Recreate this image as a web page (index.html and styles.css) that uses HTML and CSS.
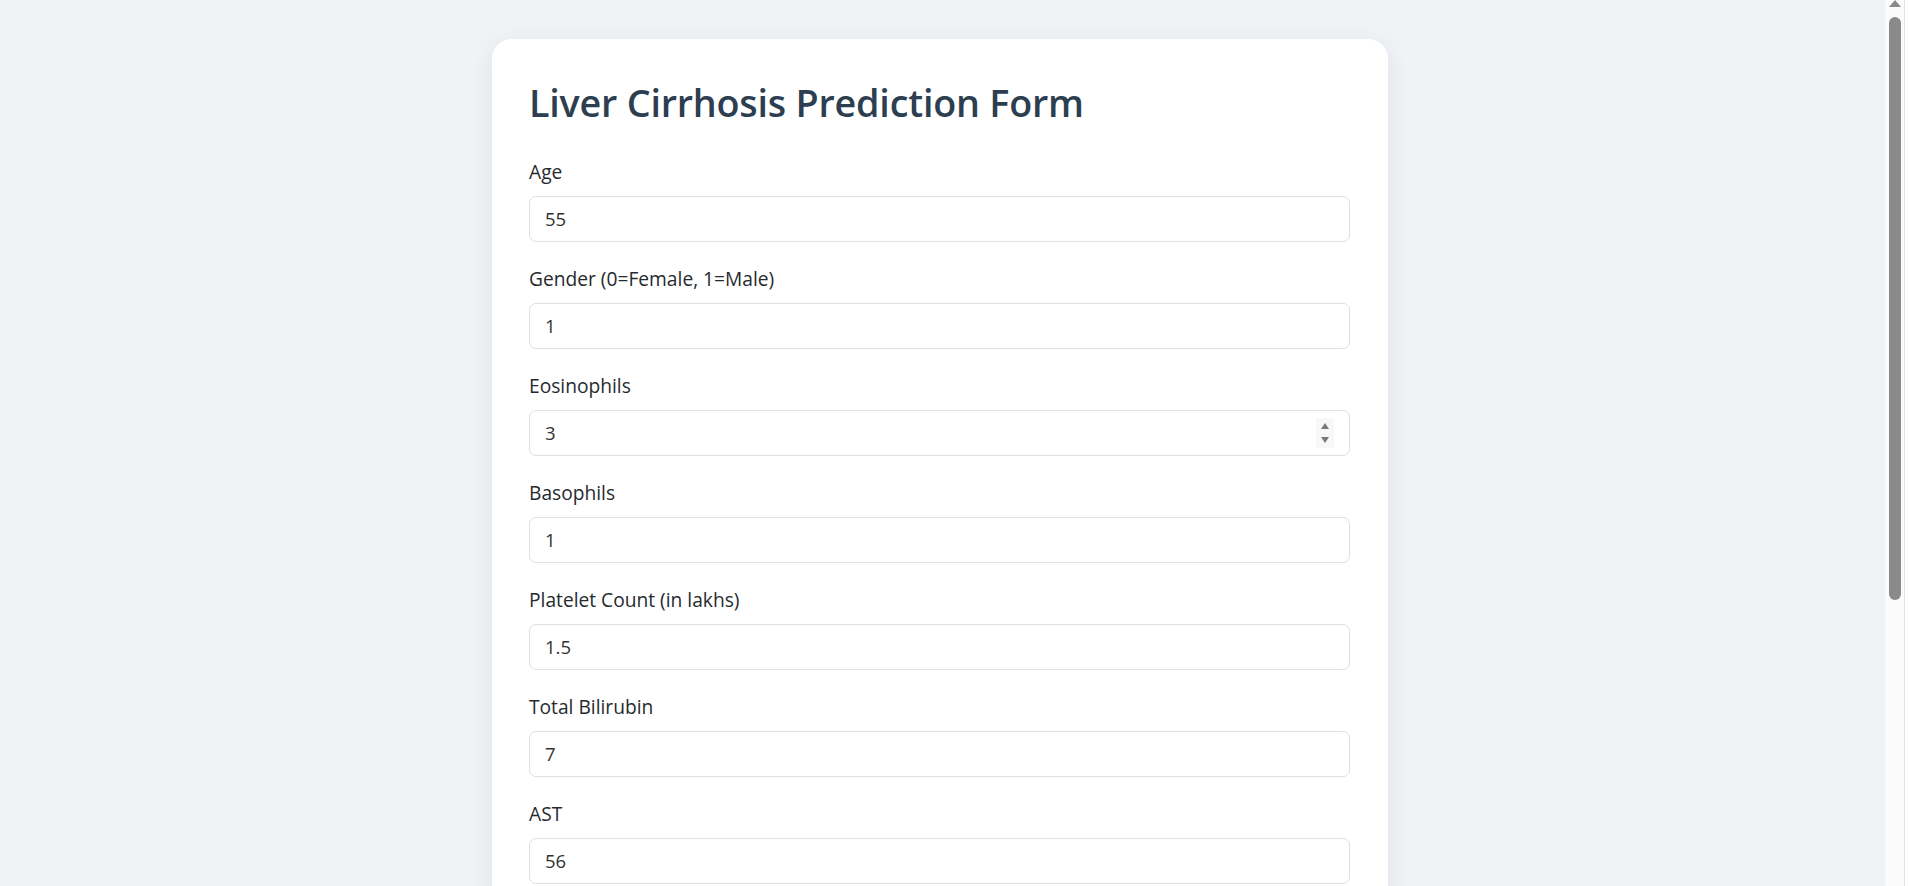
FILE: index.html
```html
<!DOCTYPE html>
<html lang="en">
<head>
<meta charset="utf-8">
<title>Liver Cirrhosis Prediction Form</title>
<link rel="stylesheet" href="styles.css">
</head>
<body>
<main class="card">
  <h1 class="title">Liver Cirrhosis Prediction Form</h1>
  <form class="form">
    <div class="field">
      <label class="label" for="age">Age</label>
      <input class="input" id="age" type="number" value="55">
    </div>
    <div class="field">
      <label class="label" for="gender">Gender (0=Female, 1=Male)</label>
      <input class="input" id="gender" type="number" value="1">
    </div>
    <div class="field">
      <label class="label" for="eos">Eosinophils</label>
      <div class="input-wrap">
        <input class="input" id="eos" type="number" value="3">
        <span class="spinner" aria-hidden="true"><span class="spin-up"></span><span class="spin-down"></span></span>
      </div>
    </div>
    <div class="field">
      <label class="label" for="baso">Basophils</label>
      <input class="input" id="baso" type="number" value="1">
    </div>
    <div class="field">
      <label class="label" for="plt">Platelet Count (in lakhs)</label>
      <input class="input" id="plt" type="number" value="1.5">
    </div>
    <div class="field">
      <label class="label" for="bili">Total Bilirubin</label>
      <input class="input" id="bili" type="number" value="7">
    </div>
    <div class="field">
      <label class="label" for="ast">AST</label>
      <input class="input" id="ast" type="number" value="56">
    </div>
    <div class="field">
      <label class="label" for="alt">ALT</label>
      <input class="input" id="alt" type="number" value="48">
    </div>
    <div class="field">
      <label class="label" for="alb">Albumin</label>
      <input class="input" id="alb" type="number" value="3.2">
    </div>
    <button class="submit" type="submit">Predict</button>
  </form>
</main>
<div class="scrollbar" aria-hidden="true">
  <span class="scroll-arrow"></span>
  <span class="scroll-thumb"></span>
</div>
</body>
</html>
```
FILE: styles.css
```css
html {
  background: #f0f3f6;
}

body {
  margin: 0;
  padding: 39px 29px 70px 0;
  font-family: "Open Sans", "Noto Sans", sans-serif;
  color: #333;
}

.card {
  box-sizing: border-box;
  width: 896px;
  margin: 0 auto;
  padding: 37.5px;
  background: #fff;
  border-radius: 20px;
  box-shadow: 0 6px 22px rgba(30, 45, 70, 0.09);
}

.title {
  margin: 2px 0 33px;
  font-size: 37.7px;
  line-height: 48px;
  font-weight: 600;
  color: #2c3e50;
  letter-spacing: -0.2px;
}

.form {
  display: flex;
  flex-direction: column;
}

.field {
  display: flex;
  flex-direction: column;
  margin-bottom: 25px;
}

.label {
  font-size: 19.2px;
  line-height: 24px;
  margin-bottom: 12px;
  color: #262a2e;
}

.input-wrap {
  position: relative;
}

.input {
  box-sizing: border-box;
  width: 100%;
  height: 46px;
  margin: 0;
  padding: 0 15px;
  font-family: inherit;
  font-size: 18.5px;
  color: #333;
  background: #fff;
  border: 1px solid #dcdfe3;
  border-radius: 7px;
  outline: none;
  -moz-appearance: textfield;
}
.input::-webkit-outer-spin-button,
.input::-webkit-inner-spin-button {
  -webkit-appearance: none;
  margin: 0;
}

.spinner {
  position: absolute;
  right: 16px;
  top: 8px;
  width: 18px;
  height: 30px;
  background: #f8f8f8;
  display: flex;
  flex-direction: column;
  align-items: center;
  justify-content: center;
  gap: 8px;
}
.spin-up {
  width: 0;
  height: 0;
  border-left: 4.5px solid transparent;
  border-right: 4.5px solid transparent;
  border-bottom: 6px solid #7a7a7a;
}
.spin-down {
  width: 0;
  height: 0;
  border-left: 4.5px solid transparent;
  border-right: 4.5px solid transparent;
  border-top: 6px solid #7a7a7a;
}

.submit {
  height: 52px;
  margin-top: 10px;
  font-family: inherit;
  font-size: 19px;
  font-weight: 600;
  color: #fff;
  background: #3498db;
  border: none;
  border-radius: 7px;
}

/* decorative window scrollbar drawn over the page edge */
.scrollbar {
  position: fixed;
  top: 0;
  right: 0;
  width: 19px;
  height: 100%;
  background: #fbfbfb;
  border-right: 1px solid #e4e4e4;
  border-left: 1px solid #f3f3f3;
  box-shadow: 3px 0 0 #fff;
  margin-right: 3px;
  display: flex;
  flex-direction: column;
  align-items: center;
}
.scroll-arrow {
  width: 0;
  height: 0;
  margin-top: 0;
  border-left: 6px solid transparent;
  border-right: 6px solid transparent;
  border-bottom: 7px solid #8a8a8a;
}
.scroll-thumb {
  width: 12px;
  height: 583px;
  margin-top: 10px;
  background: #8a8a8a;
  border-radius: 6px;
}
```
